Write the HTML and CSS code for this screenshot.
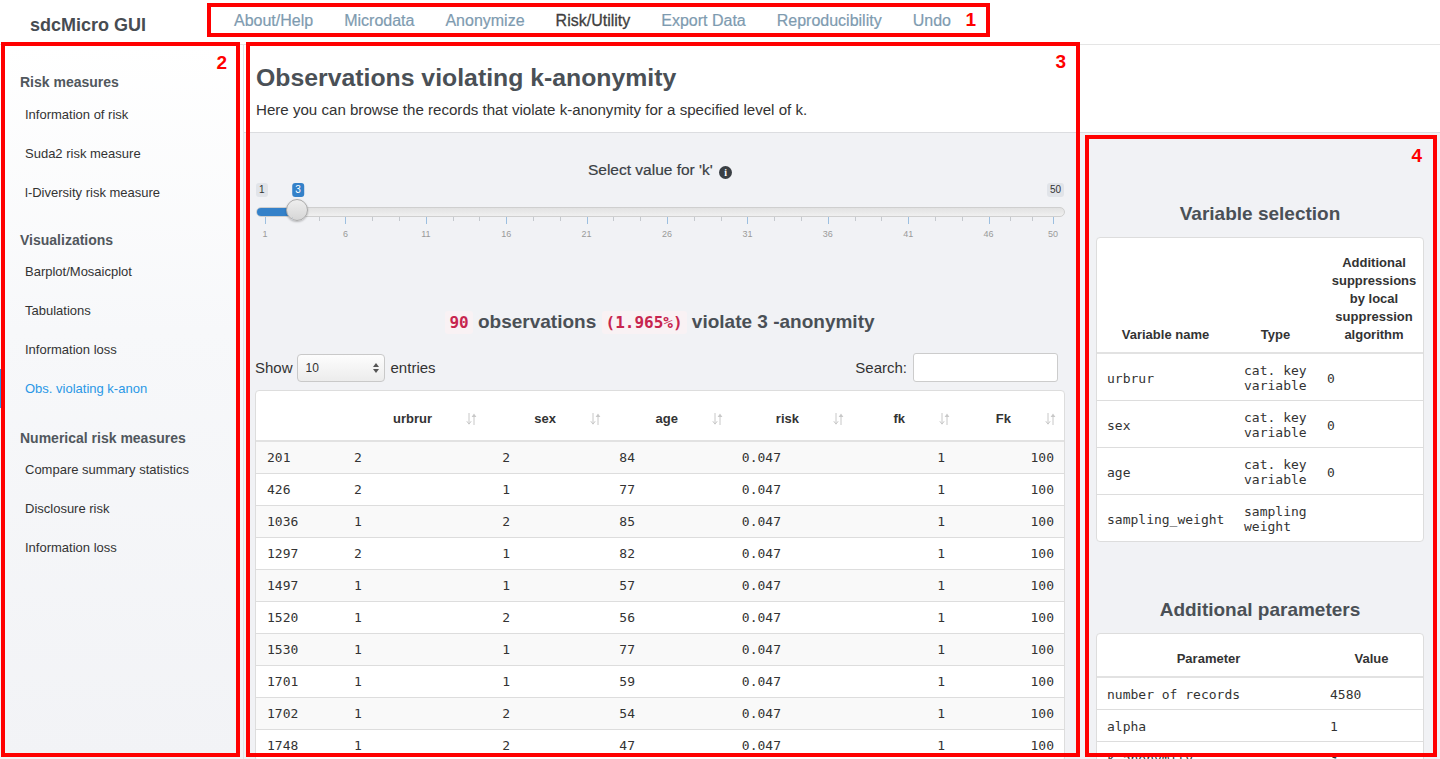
FILE: index.html
```html
<!DOCTYPE html>
<html lang="en">
<head>
<meta charset="utf-8">
<title>sdcMicro GUI</title>
<link rel="stylesheet" href="styles.css">
</head>
<body>
<header class="topbar">
  <div class="brand">sdcMicro GUI</div>
  <nav class="nav">
    <a class="nav-item">About/Help</a>
    <a class="nav-item">Microdata</a>
    <a class="nav-item">Anonymize</a>
    <a class="nav-item active">Risk/Utility</a>
    <a class="nav-item">Export Data</a>
    <a class="nav-item">Reproducibility</a>
    <a class="nav-item">Undo</a>
  </nav>
</header>

<div class="layout">
  <aside class="sidebar">
    <div class="side-head first">Risk measures</div>
    <a class="side-item">Information of risk</a>
    <a class="side-item">Suda2 risk measure</a>
    <a class="side-item">l-Diversity risk measure</a>
    <div class="side-head">Visualizations</div>
    <a class="side-item">Barplot/Mosaicplot</a>
    <a class="side-item">Tabulations</a>
    <a class="side-item">Information loss</a>
    <a class="side-item active">Obs. violating k-anon</a>
    <div class="side-head last">Numerical risk measures</div>
    <a class="side-item">Compare summary statistics</a>
    <a class="side-item">Disclosure risk</a>
    <a class="side-item">Information loss</a>
  </aside>

  <div class="content">
    <div class="page-head">
      <h1 class="page-title">Observations violating k-anonymity</h1>
      <p class="page-sub">Here you can browse the records that violate k-anonymity for a specified level of k.</p>
    </div>

    <div class="content-body">
      <main class="main-col">
        <div class="slider-label">Select value for 'k' <span class="info">i</span></div>
        <div class="slider">
          <span class="badge badge-min">1</span>
          <span class="badge badge-val">3</span>
          <span class="badge badge-max">50</span>
          <div class="track"><div class="fill"></div></div>
          <div class="handle"></div>
          <div class="grid">
            <span class="tick major" style="left:10px"></span>
            <span class="tick" style="left:36.8px"></span>
            <span class="tick" style="left:63.6px"></span>
            <span class="tick major" style="left:90.4px"></span>
            <span class="tick" style="left:117.2px"></span>
            <span class="tick" style="left:144px"></span>
            <span class="tick major" style="left:170.8px"></span>
            <span class="tick" style="left:197.6px"></span>
            <span class="tick" style="left:224.4px"></span>
            <span class="tick major" style="left:251.2px"></span>
            <span class="tick" style="left:278px"></span>
            <span class="tick" style="left:304.8px"></span>
            <span class="tick major" style="left:331.6px"></span>
            <span class="tick" style="left:358.4px"></span>
            <span class="tick" style="left:385.2px"></span>
            <span class="tick major" style="left:412px"></span>
            <span class="tick" style="left:438.8px"></span>
            <span class="tick" style="left:465.6px"></span>
            <span class="tick major" style="left:492.4px"></span>
            <span class="tick" style="left:519.2px"></span>
            <span class="tick" style="left:546px"></span>
            <span class="tick major" style="left:572.8px"></span>
            <span class="tick" style="left:599.6px"></span>
            <span class="tick" style="left:626.4px"></span>
            <span class="tick major" style="left:653.2px"></span>
            <span class="tick" style="left:680px"></span>
            <span class="tick" style="left:706.8px"></span>
            <span class="tick major" style="left:733.6px"></span>
            <span class="tick" style="left:755.1px"></span>
            <span class="tick" style="left:776.5px"></span>
            <span class="tick major" style="left:798px"></span>
            <span class="glabel" style="left:10px">1</span>
            <span class="glabel" style="left:90.4px">6</span>
            <span class="glabel" style="left:170.8px">11</span>
            <span class="glabel" style="left:251.2px">16</span>
            <span class="glabel" style="left:331.6px">21</span>
            <span class="glabel" style="left:412px">26</span>
            <span class="glabel" style="left:492.4px">31</span>
            <span class="glabel" style="left:572.8px">36</span>
            <span class="glabel" style="left:653.2px">41</span>
            <span class="glabel" style="left:733.6px">46</span>
            <span class="glabel" style="left:798px">50</span>
          </div>
        </div>

        <h3 class="summary"><code class="hl">90</code> observations <code class="hl">(1.965%)</code> violate 3 -anonymity</h3>

        <div class="dt-controls">
          <label class="dt-length">Show
            <span class="select">10
              <svg class="sel-arrows" width="6" height="10" viewBox="0 0 6 10"><path d="M0 4L3 0 6 4Z M0 6L3 10 6 6Z" fill="#555"/></svg>
            </span>
            entries</label>
          <label class="dt-search">Search: <span class="search-input"></span></label>
        </div>

        <div class="dt-card">
          <table class="dt-head">
            <colgroup><col class="hc0"><col class="hc1"><col class="hc2"><col class="hc3"><col class="hc4"><col class="hc5"><col class="hc6"></colgroup>
            <thead>
              <tr>
                <th></th>
                <th>urbrur<svg class="sort" width="11" height="14" viewBox="0 0 11 14"><path d="M3 1v11M0.8 9.2L3 12.2 5.2 9.2" stroke="#c8c8c8" fill="none"/><path d="M8 13V3" stroke="#c8c8c8" fill="none"/><path d="M5.6 5L8 1.5 10.4 5Z" fill="#c8c8c8"/></svg></th>
                <th>sex<svg class="sort" width="11" height="14" viewBox="0 0 11 14"><path d="M3 1v11M0.8 9.2L3 12.2 5.2 9.2" stroke="#c8c8c8" fill="none"/><path d="M8 13V3" stroke="#c8c8c8" fill="none"/><path d="M5.6 5L8 1.5 10.4 5Z" fill="#c8c8c8"/></svg></th>
                <th>age<svg class="sort" width="11" height="14" viewBox="0 0 11 14"><path d="M3 1v11M0.8 9.2L3 12.2 5.2 9.2" stroke="#c8c8c8" fill="none"/><path d="M8 13V3" stroke="#c8c8c8" fill="none"/><path d="M5.6 5L8 1.5 10.4 5Z" fill="#c8c8c8"/></svg></th>
                <th>risk<svg class="sort" width="11" height="14" viewBox="0 0 11 14"><path d="M3 1v11M0.8 9.2L3 12.2 5.2 9.2" stroke="#c8c8c8" fill="none"/><path d="M8 13V3" stroke="#c8c8c8" fill="none"/><path d="M5.6 5L8 1.5 10.4 5Z" fill="#c8c8c8"/></svg></th>
                <th>fk<svg class="sort" width="11" height="14" viewBox="0 0 11 14"><path d="M3 1v11M0.8 9.2L3 12.2 5.2 9.2" stroke="#c8c8c8" fill="none"/><path d="M8 13V3" stroke="#c8c8c8" fill="none"/><path d="M5.6 5L8 1.5 10.4 5Z" fill="#c8c8c8"/></svg></th>
                <th>Fk<svg class="sort" width="11" height="14" viewBox="0 0 11 14"><path d="M3 1v11M0.8 9.2L3 12.2 5.2 9.2" stroke="#c8c8c8" fill="none"/><path d="M8 13V3" stroke="#c8c8c8" fill="none"/><path d="M5.6 5L8 1.5 10.4 5Z" fill="#c8c8c8"/></svg></th>
              </tr>
            </thead>
          </table>
          <table class="dt-body">
            <colgroup><col class="bc0"><col class="bc1"><col class="bc2"><col class="bc3"><col class="bc4"><col class="bc5"><col class="bc6"></colgroup>
            <tbody>
              <tr><td>201</td><td class="l">2</td><td>2</td><td>84</td><td>0.047</td><td>1</td><td>100</td></tr>
              <tr><td>426</td><td class="l">2</td><td>1</td><td>77</td><td>0.047</td><td>1</td><td>100</td></tr>
              <tr><td>1036</td><td class="l">1</td><td>2</td><td>85</td><td>0.047</td><td>1</td><td>100</td></tr>
              <tr><td>1297</td><td class="l">2</td><td>1</td><td>82</td><td>0.047</td><td>1</td><td>100</td></tr>
              <tr><td>1497</td><td class="l">1</td><td>1</td><td>57</td><td>0.047</td><td>1</td><td>100</td></tr>
              <tr><td>1520</td><td class="l">1</td><td>2</td><td>56</td><td>0.047</td><td>1</td><td>100</td></tr>
              <tr><td>1530</td><td class="l">1</td><td>1</td><td>77</td><td>0.047</td><td>1</td><td>100</td></tr>
              <tr><td>1701</td><td class="l">1</td><td>1</td><td>59</td><td>0.047</td><td>1</td><td>100</td></tr>
              <tr><td>1702</td><td class="l">1</td><td>2</td><td>54</td><td>0.047</td><td>1</td><td>100</td></tr>
              <tr><td>1748</td><td class="l">1</td><td>2</td><td>47</td><td>0.047</td><td>1</td><td>100</td></tr>
            </tbody>
          </table>
        </div>
      </main>

      <section class="side-col">
        <h3 class="side-title">Variable selection</h3>
        <div class="card">
          <table class="info-table vars">
            <colgroup><col class="vc1"><col class="vc2"><col class="vc3"></colgroup>
            <thead>
              <tr><th>Variable name</th><th>Type</th><th>Additional suppressions by local suppression algorithm</th></tr>
            </thead>
            <tbody>
              <tr><td>urbrur</td><td>cat. key variable</td><td>0</td></tr>
              <tr><td>sex</td><td>cat. key variable</td><td>0</td></tr>
              <tr><td>age</td><td>cat. key variable</td><td>0</td></tr>
              <tr><td>sampling_weight</td><td>sampling weight</td><td></td></tr>
            </tbody>
          </table>
        </div>

        <h3 class="side-title second">Additional parameters</h3>
        <div class="card">
          <table class="info-table params">
            <colgroup><col class="pc1"><col class="pc2"></colgroup>
            <thead>
              <tr><th>Parameter</th><th>Value</th></tr>
            </thead>
            <tbody>
              <tr><td>number of records</td><td>4580</td></tr>
              <tr><td>alpha</td><td>1</td></tr>
              <tr><td>k-anonymity</td><td>3</td></tr>
            </tbody>
          </table>
        </div>
      </section>
    </div>
  </div>
</div>

<div class="annot a1"><span class="annot-num">1</span></div>
<div class="annot a2"><span class="annot-num">2</span></div>
<div class="annot a3"><span class="annot-num">3</span></div>
<div class="annot a4"><span class="annot-num">4</span></div>
</body>
</html>
```

FILE: styles.css
```css
html, body {
  margin: 0;
  padding: 0;
  height: 100%;
  overflow: hidden;
}
body {
  position: relative;
  font-family: "Liberation Sans", Arial, sans-serif;
  font-size: 14px;
  color: #333;
  background: #fff;
}

/* ---------- top bar ---------- */
.topbar {
  height: 44px;
  border-bottom: 1px solid #e5e5e5;
  display: flex;
  align-items: center;
  background: #fff;
}
.brand {
  font-size: 18px;
  font-weight: bold;
  color: #474c52;
  padding-left: 30px;
  width: 188px;
  position: relative;
  top: 3px;
}
.nav {
  display: flex;
  align-items: center;
  height: 100%;
}
.nav-item {
  font-size: 16px;
  color: #7e9bb0;
  padding: 0 15.5px;
  -webkit-text-stroke: 0.2px #7e9bb0;
  position: relative;
  top: -1px;
}
.nav-item:first-child { padding-left: 16px; }
.nav-item.active {
  color: #3f3f3f;
  -webkit-text-stroke: 0.3px #3f3f3f;
}

/* ---------- layout ---------- */
.layout {
  display: flex;
  height: calc(100% - 45px);
}
.sidebar {
  width: 244px;
  flex: none;
  border-right: 1px solid #e3e4e8;
  background: linear-gradient(#ffffff, #f7f8fa 40%, #f2f3f6);
  padding-top: 27px;
  box-sizing: border-box;
  display: flex;
  flex-direction: column;
}
.side-head {
  font-size: 14px;
  font-weight: bold;
  color: #51575d;
  line-height: 20px;
  padding-left: 20px;
  margin: 18px 0 2px;
}
.side-head.first { margin: 0 0 3px; }
.side-head.last { margin-top: 20px; }
.side-item {
  display: block;
  font-size: 13px;
  line-height: 19px;
  padding: 10px 0 10px 25px;
  color: #333;
}
.side-item.active {
  color: #2a97e6;
  border-left: 3px solid #2a97e6;
  padding-left: 22px;
}

.content {
  flex: 1;
  display: flex;
  flex-direction: column;
  min-width: 0;
}
.page-head {
  background: #fff;
  border-bottom: 1px solid #dcdde0;
  padding: 18px 12px 13px;
  height: 88px;
  box-sizing: border-box;
}
.page-title {
  margin: 0;
  font-size: 24.8px;
  line-height: 30px;
  font-weight: bold;
  color: #4a5056;
}
.page-sub {
  margin: 7px 0 0;
  font-size: 15.1px;
  line-height: 20px;
  color: #333;
}
.content-body {
  flex: 1;
  display: flex;
  background: #f1f2f5;
  min-height: 0;
}

/* ---------- main column ---------- */
.main-col {
  width: 836px;
  flex: none;
  box-sizing: border-box;
  padding: 27px 15px 0 11px;
}
.slider-label {
  text-align: center;
  font-size: 15.5px;
  line-height: 20px;
  color: #3a3f44;
  -webkit-text-stroke: 0.2px #3a3f44;
}
.info {
  display: inline-block;
  width: 13px;
  height: 13px;
  border-radius: 50%;
  background: #3a3f44;
  color: #fff;
  font: bold 10px/13px "Liberation Serif", serif;
  text-align: center;
  vertical-align: -1px;
  margin-left: 2px;
  -webkit-text-stroke: 0;
}
.slider {
  position: relative;
  height: 62px;
  margin-top: 2px;
}
.badge {
  position: absolute;
  top: 1px;
  font-size: 10px;
  line-height: 14px;
  padding: 0 3px;
  border-radius: 3px;
  background: #e1e4e9;
  color: #333;
}
.badge-min { left: 1px; }
.badge-max { right: 1px; }
.badge-val {
  left: 43px;
  transform: translateX(-50%);
  background: #3481c9;
  color: #fff;
}
.track {
  position: absolute;
  left: 1px;
  right: 0;
  top: 25px;
  height: 8px;
  border: 1px solid #cfcfcf;
  border-radius: 5px;
  background: linear-gradient(#e2e2e2, #f0f0f0);
  overflow: hidden;
}
.fill {
  width: 42px;
  height: 100%;
  background: #3481c9;
}
.handle {
  position: absolute;
  left: 31px;
  top: 17px;
  width: 22px;
  height: 22px;
  border-radius: 50%;
  box-sizing: border-box;
  border: 1px solid #aaa;
  background: linear-gradient(#eeeeee, #d6d6d6);
  box-shadow: 0 1px 2px rgba(0,0,0,0.25);
}
.grid {
  position: absolute;
  left: 0;
  right: 0;
  top: 35px;
  height: 25px;
}
.tick {
  position: absolute;
  top: 0;
  width: 1px;
  height: 4px;
  background: #c5c9ce;
}
.tick.major {
  height: 7px;
  background: #9cbfe0;
}
.glabel {
  position: absolute;
  top: 11px;
  font-size: 9px;
  line-height: 12px;
  color: #9a9a9a;
  transform: translateX(-50%);
}

.summary {
  margin: 65px 0 0;
  text-align: center;
  font-size: 19px;
  line-height: 26px;
  font-weight: bold;
  color: #4a5056;
}
.hl {
  font-family: "DejaVu Sans Mono", "Liberation Mono", monospace;
  font-size: 16px;
  font-weight: bold;
  color: #c7254e;
  background: #f9f2f4;
  padding: 2px 4px;
  border-radius: 3px;
}

.dt-controls {
  display: flex;
  justify-content: space-between;
  align-items: center;
  margin-top: 17px;
  height: 29px;
  padding-right: 7px;
}
.dt-length, .dt-search {
  display: flex;
  align-items: center;
  font-size: 15px;
  color: #333;
}
.select {
  position: relative;
  display: inline-block;
  width: 88px;
  height: 28px;
  box-sizing: border-box;
  margin: 0 6px 0 4px;
  border: 1px solid #c9c9c9;
  border-radius: 4px;
  background: linear-gradient(#fdfdfd, #ececec);
  font-size: 12px;
  line-height: 26px;
  padding-left: 8px;
  color: #333;
}
.sel-arrows {
  position: absolute;
  right: 5px;
  top: 8px;
}
.search-input {
  display: inline-block;
  width: 145px;
  height: 29px;
  box-sizing: border-box;
  border: 1px solid #ccc;
  border-radius: 3px;
  background: #fff;
  margin-left: 6px;
}

.dt-card {
  margin-top: 8px;
  background: #fff;
  border: 1px solid #dddddd;
  border-radius: 4px;
  overflow: hidden;
}
.dt-head, .dt-body {
  width: 808px;
  table-layout: fixed;
  border-collapse: collapse;
}
.hc0 { width: 90px; }
.hc1 { width: 139px; }
.hc2 { width: 124px; }
.hc3 { width: 122px; }
.hc4 { width: 121px; }
.hc5 { width: 106px; }
.hc6 { width: 106px; }
.dt-head th {
  position: relative;
  text-align: right;
  font-size: 13px;
  font-weight: bold;
  line-height: 18px;
  color: #333;
  padding: 19px 53px 12px 0;
  border-bottom: 2px solid #e2e2e2;
}
.sort {
  position: absolute;
  right: 8px;
  top: 21px;
}
.bc0 { width: 88px; }
.bc1 { width: 76px; }
.bc2 { width: 100px; }
.bc3 { width: 125px; }
.bc4 { width: 146px; }
.bc5 { width: 164px; }
.bc6 { width: 109px; }
.dt-body td {
  font-family: "DejaVu Sans Mono", "Liberation Mono", monospace;
  font-size: 13px;
  line-height: 15px;
  color: #333;
  padding: 8px 10px;
  text-align: right;
  border-top: 1px solid #dddddd;
}
.dt-body tr:first-child td { border-top: 0; }
.dt-body td:first-child { text-align: left; padding-left: 11px; }
.dt-body td.l { text-align: left; }
.dt-body tr:nth-child(odd) td { background: #f9f9f9; }

/* ---------- right column ---------- */
.side-col {
  flex: 1;
  padding: 68px 16px 0;
  box-sizing: border-box;
}
.side-title {
  margin: 0 0 10px;
  text-align: center;
  font-size: 19px;
  line-height: 26px;
  font-weight: bold;
  color: #4a5056;
}
.side-title.second { margin-top: 55px; }
.card {
  background: #fff;
  border: 1px solid #dddddd;
  border-radius: 4px;
  overflow: hidden;
}
.info-table {
  width: 100%;
  table-layout: fixed;
  border-collapse: collapse;
}
.vc1 { width: 137px; }
.vc2 { width: 83px; }
.vc3 { width: 106px; }
.pc1 { width: 223px; }
.pc2 { width: 103px; }
.info-table th {
  font-size: 13px;
  font-weight: bold;
  line-height: 18px;
  color: #333;
  text-align: center;
  vertical-align: bottom;
  padding: 16px 8px 8px;
  border-bottom: 2px solid #e2e2e2;
}
.vars th:last-child { padding-left: 12px; padding-right: 4px; }
.info-table td {
  font-family: "DejaVu Sans Mono", "Liberation Mono", monospace;
  font-size: 13px;
  line-height: 15px;
  color: #333;
  padding: 9px 10px 7px;
  vertical-align: middle;
  border-top: 1px solid #dddddd;
}
.info-table tbody tr:first-child td { border-top: 0; }

/* ---------- annotation overlays ---------- */
.annot {
  position: absolute;
  box-sizing: border-box;
  border: 4px solid #ff0000;
  pointer-events: none;
}
.annot-num {
  position: absolute;
  font-family: "Liberation Sans", Arial, sans-serif;
  font-size: 19px;
  font-weight: bold;
  color: #ff0000;
  line-height: 20px;
}
.a1 { left: 207px; top: 3px; width: 783px; height: 34px; }
.a1 .annot-num { right: 10px; top: 3px; }
.a2 { left: 1px; top: 42px; width: 239px; height: 715px; }
.a2 .annot-num { right: 9px; top: 7px; }
.a3 { left: 246px; top: 42px; width: 834px; height: 715px; }
.a3 .annot-num { right: 10px; top: 6px; }
.a4 { left: 1085px; top: 135px; width: 352px; height: 622px; }
.a4 .annot-num { right: 11px; top: 7px; }
```
